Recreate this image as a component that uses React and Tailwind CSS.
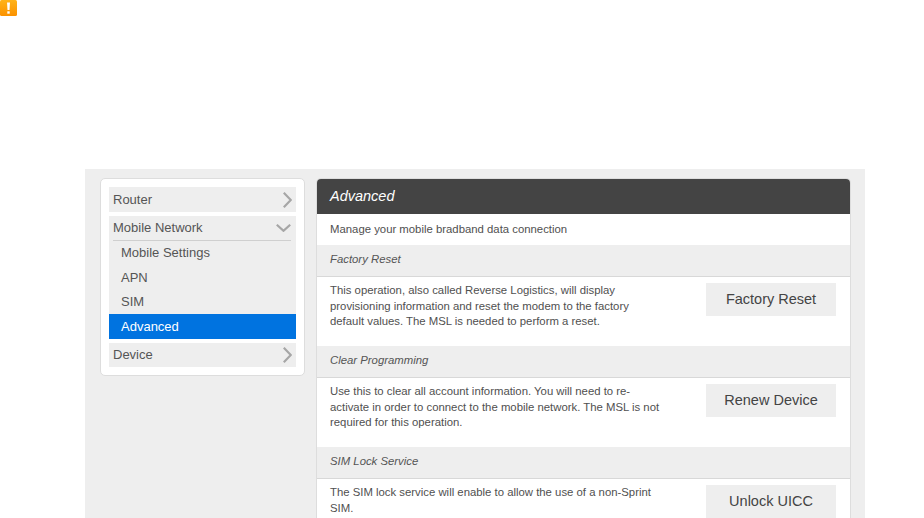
function Chevron({ down }) {
  return (
    <svg width={down ? 15 : 9} height={down ? 8 : 16} viewBox={down ? "0 0 15 8" : "0 0 9 16"} fill="none" stroke="#a6a6a6" strokeWidth="2.2">
      {down ? <path d="M0.8 0.8 L7.5 6.8 L14.2 0.8" /> : <path d="M0.8 0.8 L7.8 8 L0.8 15.2" />}
    </svg>
  );
}

function Section({ title, lines, button, h }) {
  return (
    <>
      <div className="h-[31px] pl-[13px] pb-[2px] flex items-center bg-[#eeeeee] italic text-[#555555]">{title}</div>
      <div className="h-px bg-[#d8d8d8]" />
      <div className={`flex justify-between pl-[13px] pr-[14px] ${h}`}>
        <p className="pt-[6px] leading-[15.5px] text-[#505050] whitespace-nowrap">
          {lines.map((l) => (
            <span key={l} className="block">{l}</span>
          ))}
        </p>
        <button className="mt-[6px] w-[130px] h-[33px] bg-[#eeeeee] text-[14.5px] text-[#444444]">{button}</button>
      </div>
    </>
  );
}

export default function App() {
  return (
    <div className="h-[518px] w-[924px] overflow-hidden bg-white font-['Liberation_Sans',Arial,sans-serif] text-[11.35px]">
      <div className="h-[169px]">
        <svg width="17" height="16" viewBox="0 0 17 16" className="block">
          <defs>
            <linearGradient id="warn" x1="0" y1="0" x2="0" y2="1">
              <stop offset="0" stopColor="#ffb319" />
              <stop offset="1" stopColor="#fb9200" />
            </linearGradient>
          </defs>
          <rect width="17" height="16" rx="1.5" fill="url(#warn)" />
          <path d="M7 2.5 h3 l-0.5 7.5 h-2 z" fill="#fff" />
          <rect x="7.3" y="11.3" width="2.4" height="2.4" fill="#fff" />
        </svg>
      </div>
      <div className="ml-[85px] w-[780px] h-[349px] bg-[#eeeeee] flex items-start pl-[15px] pt-[9px] overflow-hidden">
        <nav className="w-[205px] h-[198px] bg-white border border-[#dddddd] rounded-[5px] pt-[8px] px-[8px] text-[#555555] text-[13px] shrink-0">
          <div className="h-[25px] bg-[#eeeeee] flex items-center justify-between pl-[4px] pr-[4px]">
            <span>Router</span>
            <Chevron />
          </div>
          <div className="mt-[4px] bg-[#eeeeee]">
            <div className="h-[25px] ml-[4px] mr-[5px] flex items-center justify-between border-b border-[#cfcfcf]">
              <span>Mobile Network</span>
              <Chevron down />
            </div>
            <div className="h-[25px] pb-[1px] pl-[12px] flex items-center">Mobile Settings</div>
            <div className="h-[24px] pl-[12px] flex items-center">APN</div>
            <div className="h-[24px] pl-[12px] flex items-center">SIM</div>
            <div className="h-[25px] pl-[12px] flex items-center bg-[#0073e0] text-white">Advanced</div>
          </div>
          <div className="mt-[4px] h-[24px] bg-[#eeeeee] flex items-center justify-between pl-[4px] pr-[4px]">
            <span>Device</span>
            <Chevron />
          </div>
        </nav>
        <main className="ml-[11px] w-[535px] bg-white border-t border-r border-l border-[#dddddd] rounded-t-[5px]">
          <div className="h-[35px] bg-[#444444] rounded-t-[4px] pl-[13px] flex items-center italic text-white text-[14.5px]">Advanced</div>
          <div className="h-[31px] pl-[13px] flex items-center text-[#505050]">Manage your mobile bradband data connection</div>
          <Section
            title="Factory Reset"
            h="h-[69px]"
            button="Factory Reset"
            lines={[
              "This operation, also called Reverse Logistics, will display",
              "provisioning information and reset the modem to the factory",
              "default values. The MSL is needed to perform a reset.",
            ]}
          />
          <Section
            title="Clear Programming"
            h="h-[69px]"
            button="Renew Device"
            lines={[
              "Use this to clear all account information. You will need to re-",
              "activate in order to connect to the mobile network. The MSL is not",
              "required for this operation.",
            ]}
          />
          <Section
            title="SIM Lock Service"
            h="h-[60px]"
            button="Unlock UICC"
            lines={[
              "The SIM lock service will enable to allow the use of a non-Sprint",
              "SIM.",
            ]}
          />
        </main>
      </div>
    </div>
  );
}
